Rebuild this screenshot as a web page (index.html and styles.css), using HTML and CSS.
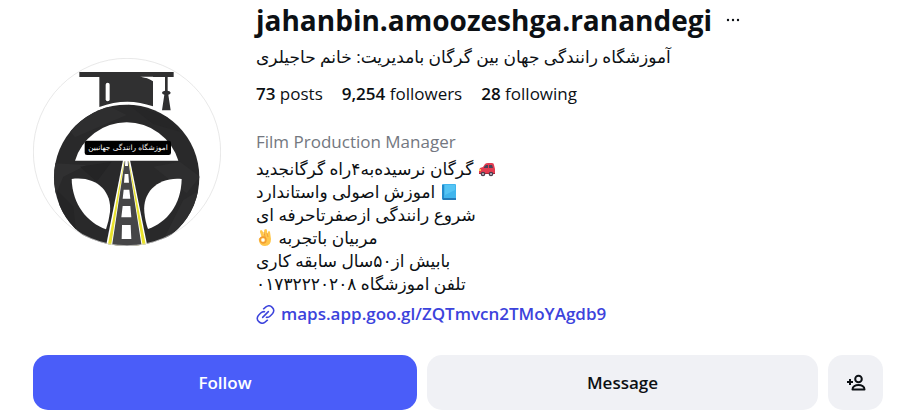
FILE: index.html
```html
<!DOCTYPE html>
<html lang="en">
<head>
<meta charset="utf-8">
<meta name="viewport" content="width=device-width, initial-scale=1">
<title>jahanbin.amoozeshga.ranandegi</title>
<link rel="stylesheet" href="styles.css">
</head>
<body>
<main class="profile">
  <header class="summary">
    <svg class="avatar" viewBox="39 24 564 564" role="img" aria-label="Profile picture">
      <defs>
        <clipPath id="round"><circle cx="321" cy="306" r="282"/></clipPath>
        <clipPath id="wheel"><circle cx="320" cy="382" r="218"/></clipPath>
      </defs>
      <g clip-path="url(#round)">
        <rect x="39" y="24" width="564" height="564" fill="#fff"/>
        <path d="M178 66H461V81H443V122Q452 124 452 128Q452 132 445 134L452 181H426L433 134Q426 132 426 128Q426 124 435 122V81H178Z" fill="#303031"/>
        <path d="M238 80H360Q388 84 399 94V169Q320 140 238 171Z" fill="#303031"/>
        <path d="M360 80H399V91Q385 82 360 80Z" fill="#fff"/>
        <rect x="257" y="98" width="12" height="56" rx="6" fill="#fff"/>
        <circle cx="320" cy="382" r="218" fill="#29292a"/>
        <g clip-path="url(#wheel)">
          <path d="M140 230L260 165L320 195L250 225L165 262Z" fill="#2e2e2f"/>
          <path d="M320 160L440 200L480 245L400 222Z" fill="#262627"/>
          <path d="M100 340L200 345L130 380L100 450Z" fill="#303031"/>
          <path d="M180 350L275 335L230 395Z" fill="#242425"/>
          <path d="M400 350L480 335L540 380L500 430Z" fill="#2e2e2f"/>
          <path d="M490 450L540 420L510 520L430 570Z" fill="#2e2e2f"/>
          <path d="M110 420L160 470L170 560L130 530Z" fill="#252526"/>
        </g>
        <path d="M165 332A162 162 0 0 1 475 332Z" fill="#fff"/>
        <path d="M155 387C225 377 276 420 270 486Q266 516 258 538C202 518 157 464 155 387Z" fill="#fff"/>
        <path d="M485 387C416 380 367 425 373 486Q376 516 384 537C440 518 484 464 485 387Z" fill="#fff"/>
        <path d="M309 330H330L382 588H258Z" fill="#fff"/>
        <path d="M312 334H327L378 588H263Z" fill="#e9e32c"/>
        <path d="M313 334H326L368 588H273Z" fill="#fff"/>
        <path d="M314 334H325L365 588H276Z" fill="#464647"/>
        <path d="M316 331H323L324 348H315ZM314 372H325L327 398H312ZM311 419H328L331 446H308ZM308 468H331L334 502H304ZM306 525H332L334 567H305Z" fill="#fff"/>
        <rect x="194" y="272" width="259" height="43" rx="7" fill="#000"/>
        <text class="avatar-text" x="324" y="301" text-anchor="middle" direction="rtl">اموزشگاه رانندگی جهانبین</text>
      </g>
      <circle cx="321" cy="306" r="281" fill="none" stroke="#dcdcdc" stroke-width="2"/>
    </svg>
    <section class="details">
      <div class="name-row">
        <h1>jahanbin.amoozeshga.ranandegi</h1>
        <button class="more" type="button" aria-label="Options">
          <svg viewBox="0 0 14 4" aria-hidden="true"><circle cx="2" cy="2" r="1.2"/><circle cx="7" cy="2" r="1.2"/><circle cx="12" cy="2" r="1.2"/></svg>
        </button>
      </div>
      <p class="full-name" dir="rtl">آموزشگاه رانندگی جهان بین گرگان بامدیریت: خانم حاجیلری</p>
      <ul class="stats">
        <li><b>73</b> posts</li>
        <li><b>9,254</b> followers</li>
        <li><b>28</b> following</li>
      </ul>
      <p class="category">Film Production Manager</p>
      <div class="bio" dir="rtl">
        <p><svg class="emoji" viewBox="0 0 18 18" aria-hidden="true"><path d="M1 10L2 8L5 7L7 4Q8 3 10 3H14Q16 3 16 5L17 9V14H1Z" fill="#e33b50"/><path d="M6 7L8 5H10V8H6ZM11 5H14L15 8H11Z" fill="#4a4358"/><path d="M1 13H17V14H1Z" fill="#a9283b"/><circle cx="5" cy="14" r="2.3" fill="#493f4d"/><circle cx="13" cy="14" r="2.3" fill="#493f4d"/><circle cx="5" cy="14" r="1" fill="#c5bdcb"/><circle cx="13" cy="14" r="1" fill="#c5bdcb"/><path d="M1 9H3V11H1Z" fill="#ffc94b"/></svg> گرگان نرسیده‌به۴راه گرگانجدید</p>
        <p><svg class="emoji" viewBox="0 0 18 18" aria-hidden="true"><rect x="2" y="1" width="14" height="16" rx="1" fill="#40b5ed"/><path d="M2 2H4V16H2Z" fill="#248bcb"/><path d="M3 15H16V17H3Z" fill="#2479b8"/><path d="M5 2H15V7L5 12Z" fill="#55c4f4"/></svg> اموزش اصولی واستاندارد</p>
        <p>شروع رانندگی ازصفرتاحرفه ای</p>
        <p>مربیان باتجربه <svg class="emoji" viewBox="0 0 18 18" aria-hidden="true"><path d="M6 9L4 3Q4 1 5 1Q6 1 7 3L9 8L8 2Q8 0 10 0Q11 0 11 2L12 7L12 3Q13 1 14 3L15 10Q15 17 9 17Q4 17 3 12Q2 8 6 9Z" fill="#ffc74b"/><circle cx="7" cy="11" r="3" fill="none" stroke="#f29a32" stroke-width="1.3"/><circle cx="7" cy="11" r="1.7" fill="#fff"/><path d="M9 8L8 3M12 8L11 4" fill="none" stroke="#eea039"/></svg></p>
        <p>بابیش از۵۰سال سابقه کاری</p>
        <p>تلفن اموزشگاه ۰۱۷۳۲۲۲۰۲۰۸</p>
      </div>
      <a class="site" href="#">
        <svg viewBox="0 0 20 20" aria-hidden="true"><path d="M8 4L10.500 2A5 5 0 0 1 17.500 9L15 11.500A5 5 0 0 1 11 13M12 16L9.500 18A5 5 0 0 1 2.500 11L5 8.500A5 5 0 0 1 9 7M7 13L13 7"/></svg>
        <span>maps.app.goo.gl/ZQTmvcn2TMoYAgdb9</span>
      </a>
    </section>
  </header>
  <div class="actions">
    <button class="follow" type="button">Follow</button>
    <button class="message" type="button">Message</button>
    <button class="suggest" type="button" aria-label="Similar accounts">
      <svg viewBox="0 0 20 18" aria-hidden="true"><circle cx="12.500" cy="5" r="3.300"/><path d="M6.500 15.500C6.500 9.500 18.500 9.500 18.500 15.500ZM4 5V11M1 8H7"/></svg>
    </button>
  </div>
</main>
</body>
</html>
```
FILE: styles.css
```css
* { box-sizing: border-box; }
body {
  margin: 0;
  background: #fff;
  color: #0c1014;
  font: 17px/24px "Open Sans", "Noto Sans", "DejaVu Sans", sans-serif;
}
h1, p, ul { margin: 0; padding: 0; }
button { border: 0; padding: 0; font: inherit; color: inherit; cursor: pointer; }
.profile { padding: 0 20px 4px 33px; }
.summary { display: flex; gap: 35px; align-items: flex-start; }
.avatar { flex: none; width: 188px; height: 188px; margin-top: 58px; }
.avatar-text { font: 22px "DejaVu Sans", sans-serif; fill: #fff; }
.details { flex: 1; min-width: 0; }
.name-row { display: flex; align-items: center; gap: 14px; height: 40px; }
h1 { font-size: 28px; line-height: 40px; font-weight: 700; }
.more { display: flex; background: none; }
.more svg { width: 14px; height: 4px; fill: #0c1014; }
.full-name { margin-top: 4px; line-height: 26px; text-align: left; }
.stats { display: flex; gap: 19px; margin-top: 12px; list-style: none; }
.stats b { font-weight: 600; }
.category { margin-top: 24px; color: #737780; }
.bio { margin-top: 3px; text-align: left; }
.bio p { height: 23px; line-height: 23px; white-space: nowrap; }
.emoji { width: 18px; height: 18px; vertical-align: -3px; }
.site { display: flex; align-items: center; gap: 6px; width: max-content; margin-top: 7px; color: #3c43dc; font-weight: 600; text-decoration: none; }
.site svg { width: 19px; height: 19px; fill: none; stroke: currentColor; stroke-width: 1.6; stroke-linecap: round; }
.actions { display: grid; grid-template-columns: 384fr 391fr 55px; gap: 10px; margin-top: 29px; }
.actions button { display: flex; align-items: center; justify-content: center; height: 55px; border-radius: 15px; background: #f0f1f5; font-weight: 600; }
.actions .follow { background: #4a5df9; color: #fff; }
.suggest svg { width: 20px; height: 18px; fill: none; stroke: #0c1014; stroke-width: 2; stroke-linejoin: round; }
```
